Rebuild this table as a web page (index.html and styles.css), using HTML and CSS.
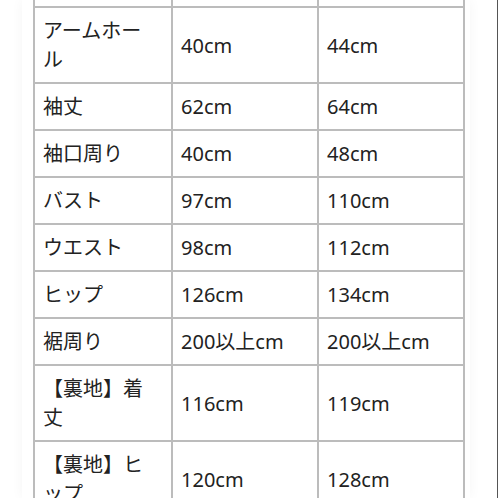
FILE: index.html
```html
<!DOCTYPE html>
<html lang="ja">
<head>
<meta charset="utf-8">
<link rel="stylesheet" href="styles.css">
</head>
<body>
<div class="page">
  <div class="card">
    <table class="size-table">
      <colgroup>
        <col class="c1"><col class="c2"><col class="c3">
      </colgroup>
      <tbody>
        <tr class="cut-row"><td></td><td></td><td></td></tr>
        <tr><td>アームホール</td><td>40cm</td><td>44cm</td></tr>
        <tr><td>袖丈</td><td>62cm</td><td>64cm</td></tr>
        <tr><td>袖口周り</td><td>40cm</td><td>48cm</td></tr>
        <tr><td>バスト</td><td>97cm</td><td>110cm</td></tr>
        <tr><td>ウエスト</td><td>98cm</td><td>112cm</td></tr>
        <tr><td>ヒップ</td><td>126cm</td><td>134cm</td></tr>
        <tr><td>裾周り</td><td>200以上cm</td><td>200以上cm</td></tr>
        <tr><td>【裏地】着丈</td><td>116cm</td><td>119cm</td></tr>
        <tr><td>【裏地】ヒップ</td><td>120cm</td><td>128cm</td></tr>
      </tbody>
    </table>
  </div>
  <div class="edge"></div>
</div>
</body>
</html>
```
FILE: styles.css
```css
html, body {
  margin: 0;
  padding: 0;
  background: #ffffff;
  height: 100%;
  overflow: hidden;
}
.page {
  display: flex;
  height: 100%;
  padding-left: 22px;
  box-sizing: border-box;
}
.card {
  width: 448px;
  background: #ffffff;
  box-shadow: 0 0 12px rgba(0, 0, 0, 0.045);
  padding-left: 11px;
  box-sizing: border-box;
}
.edge {
  margin-left: auto;
  width: 1px;
  background: #555;
}
.size-table {
  border-collapse: collapse;
  table-layout: fixed;
  width: 432px;
  margin-top: -41px;
  font-family: "Noto Sans", "Noto Sans CJK JP", sans-serif;
  font-size: 20px;
  line-height: 29px;
  color: #222;
}
.c1 { width: 138px; }
.c2 { width: 146px; }
.c3 { width: 146px; }
.size-table td {
  border: 2px solid #bcbcbc;
  padding: 8px 8px 8px 8px;
  vertical-align: middle;
  word-break: break-all;
}
.size-table td:first-child {
  padding-right: 12px;
}
.size-table .cut-row td {
  height: 29px;
}
```
